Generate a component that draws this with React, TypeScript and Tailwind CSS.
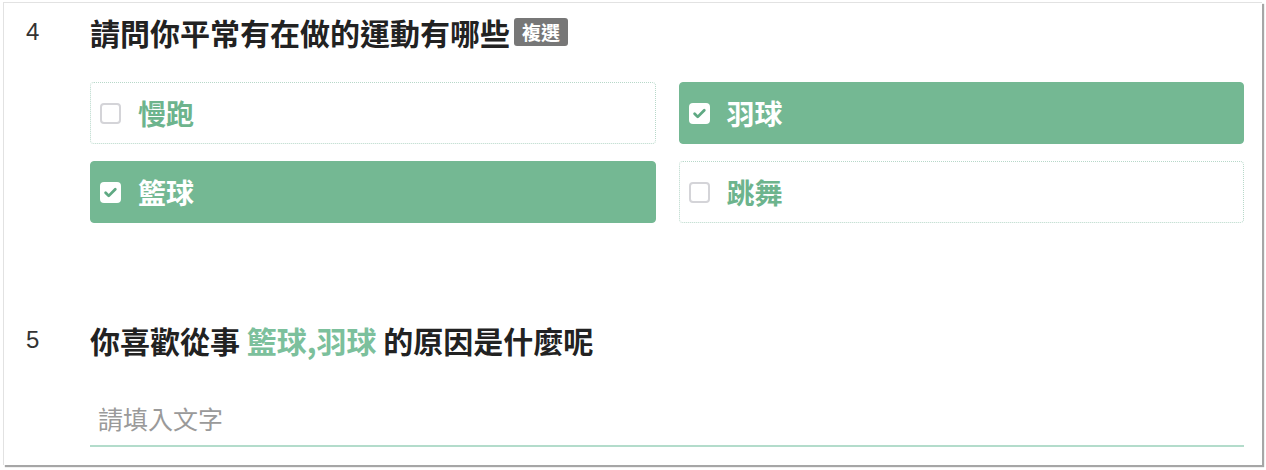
import React, { useState } from "react";

const cjk = "font-['Noto_Sans_CJK_TC','Noto_Sans_CJK_SC',sans-serif]";

const sports = [
  { label: "慢跑", checked: false },
  { label: "羽球", checked: true },
  { label: "籃球", checked: true },
  { label: "跳舞", checked: false },
];

function Check({ on }: { on: boolean }) {
  if (!on) {
    return <span className="block w-[21px] h-[21px] rounded-[4px] border-2 border-[#d4d4d8] bg-white" />;
  }
  return (
    <span className="flex items-center justify-center w-[21px] h-[21px] rounded-[4px] bg-white">
      <svg viewBox="0 0 16 16" className="w-[15px] h-[15px]">
        <path d="M2.8 8.3l3.3 3.3 7-7" fill="none" stroke="#5fa983" strokeWidth="3" strokeLinecap="round" strokeLinejoin="round" />
      </svg>
    </span>
  );
}

export default function App() {
  const [items, setItems] = useState(sports);

  const toggle = (idx: number) =>
    setItems((prev) => prev.map((s, i) => (i === idx ? { ...s, checked: !s.checked } : s)));

  return (
    <div className={`w-[1266px] h-[470px] bg-white ${cjk}`}>
      <div className="ml-[3px] mt-[2px] w-[1259px] h-[463px] bg-white border-l border-t border-[#e2e2e2] shadow-[2px_2px_1px_rgba(0,0,0,0.35)]">
        <div className="pl-[22px] pr-[18px] pt-[13px]">
          {/* Question 4 */}
          <div className="flex items-center h-[32px]">
            <span className="w-[64px] text-[24px] text-[#333] font-['Liberation_Sans',sans-serif]">4</span>
            <h3 className="text-[30px] leading-none font-bold text-[#222]">請問你平常有在做的運動有哪些</h3>
            <span className="ml-[4px] px-[8px] py-[3px] rounded-[3px] bg-[#777] text-white text-[19px] leading-[22px] font-bold">
              複選
            </span>
          </div>

          <div className="ml-[64px] mt-[34px] grid grid-cols-2 gap-x-[23px] gap-y-[17px]">
            {items.map((item, idx) => (
              <button
                key={item.label}
                onClick={() => toggle(idx)}
                className={`flex items-center gap-[17px] h-[62px] pl-[9px] rounded-[4px] text-left ${
                  item.checked
                    ? "bg-[#74b893] border border-[#74b893]"
                    : "bg-white border border-dotted border-[#b7d8c9]"
                }`}
              >
                <Check on={item.checked} />
                <span
                  className={`text-[28px] leading-none font-bold ${
                    item.checked ? "text-white" : "text-[#6db48d]"
                  }`}
                >
                  {item.label}
                </span>
              </button>
            ))}
          </div>

          {/* Question 5 */}
          <div className="flex items-center h-[32px] mt-[101px]">
            <span className="w-[64px] text-[24px] text-[#333] font-['Liberation_Sans',sans-serif]">5</span>
            <h3 className="text-[30px] leading-none font-bold text-[#222]">
              你喜歡從事 <span className="text-[#7cc09c]">籃球,羽球</span> 的原因是什麼呢
            </h3>
          </div>

          <div className="ml-[64px] mt-[36px]">
            <input
              placeholder="請填入文字"
              className="block w-full h-[53px] pl-[8px] pb-[2px] text-[25px] text-[#333] placeholder:text-[#9a9a9a] outline-none bg-transparent"
            />
            <div className="h-[2px] bg-[#b3dccb]" />
          </div>
        </div>
      </div>
    </div>
  );
}
